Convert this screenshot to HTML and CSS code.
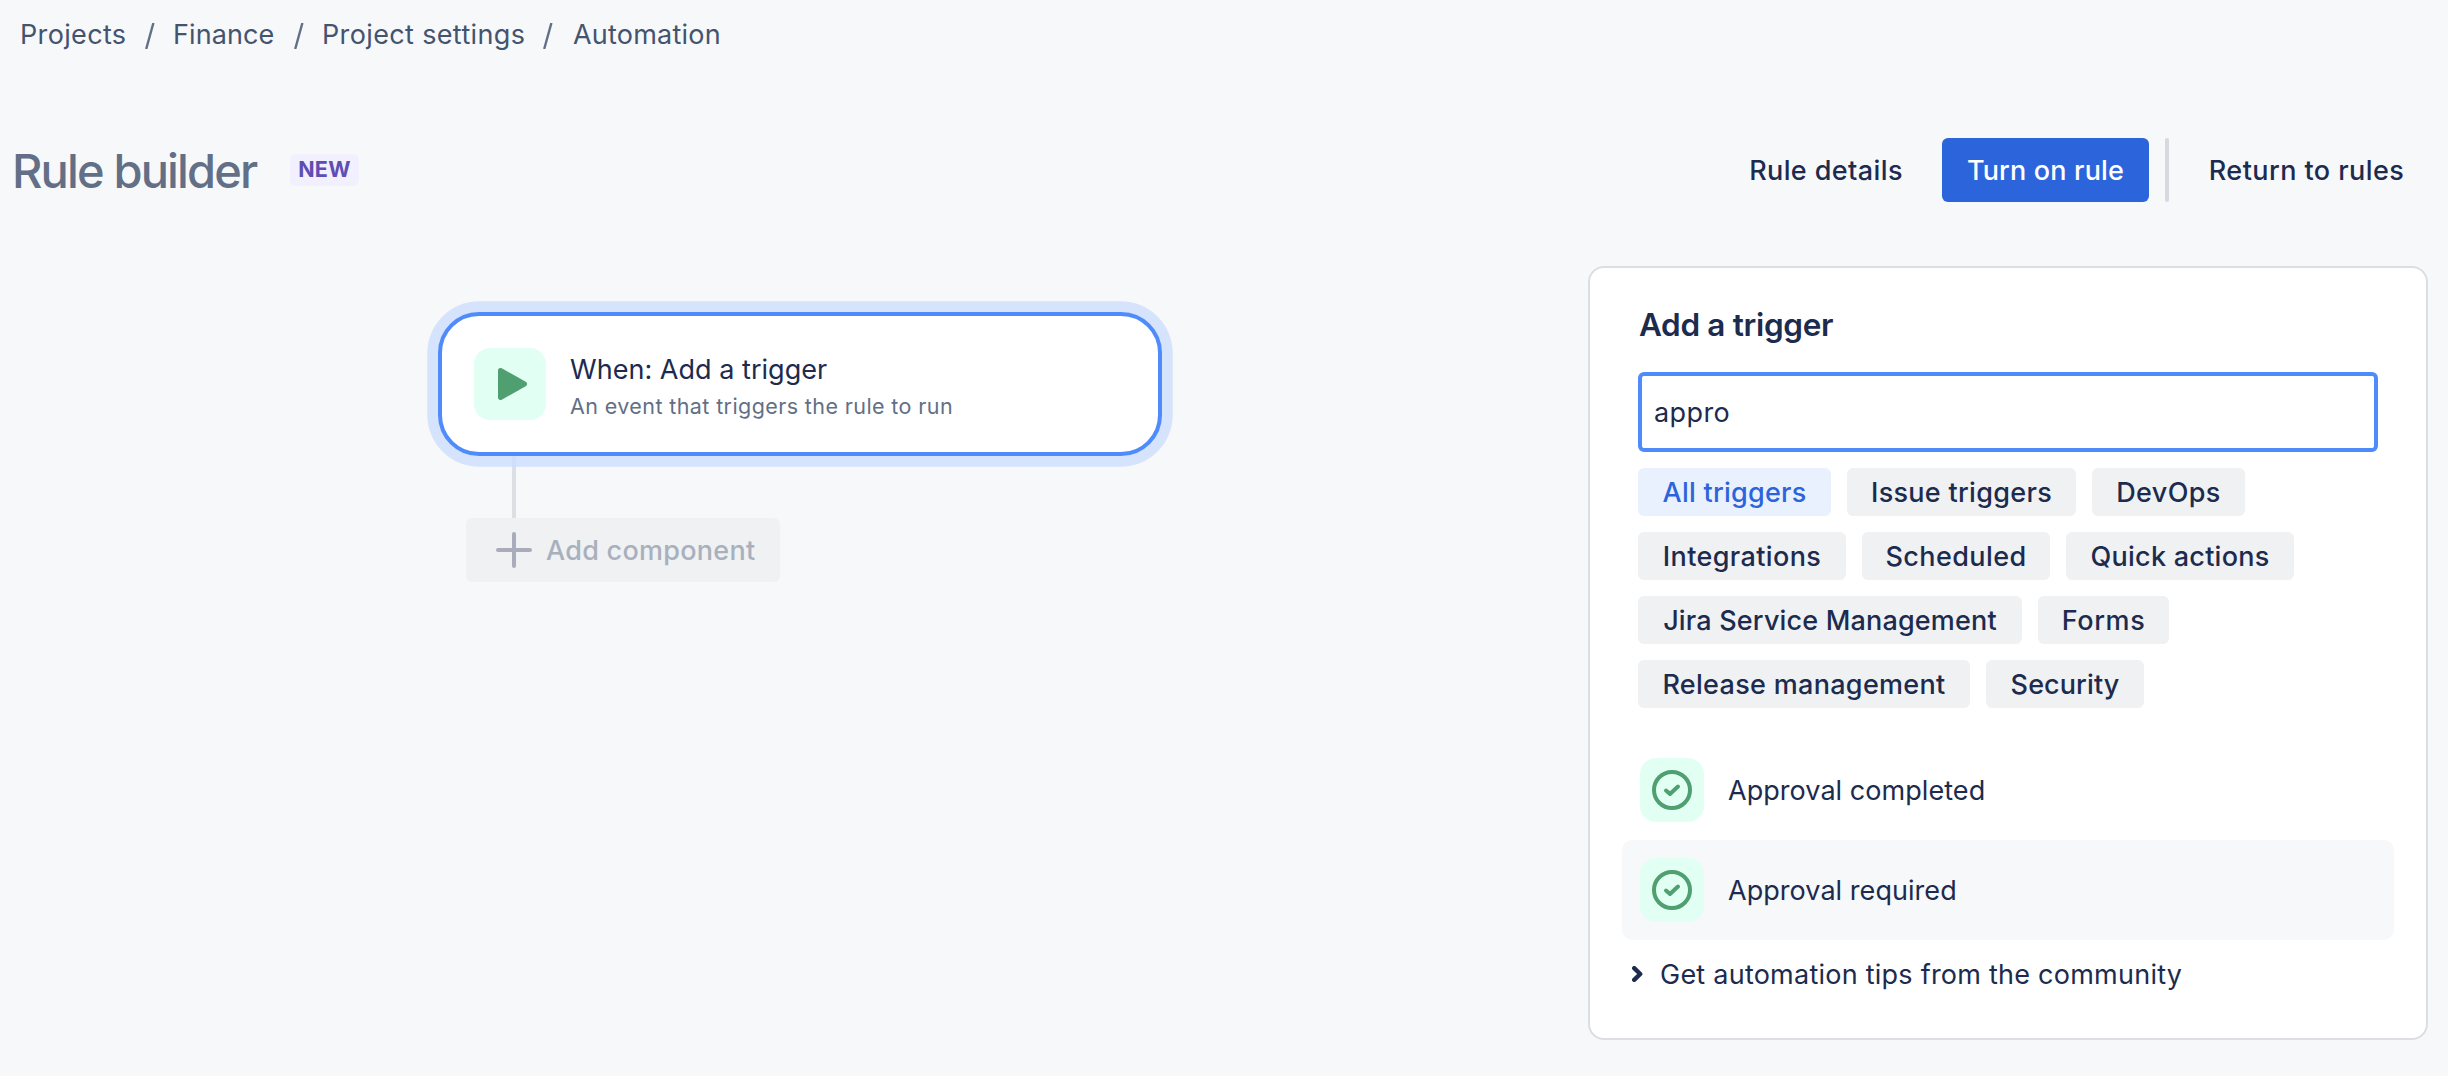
FILE: index.html
```html
<!DOCTYPE html>
<html lang="en">
<head>
<meta charset="utf-8">
<title>Rule builder</title>
<link rel="stylesheet" href="styles.css">
</head>
<body>
<nav class="breadcrumbs">
  <span class="crumb crumb-projects">Projects</span>
  <svg class="slash" viewBox="0 0 10 26"><path d="M1.200 26 8.400 0"/></svg>
  <span class="crumb crumb-finance">Finance</span>
  <svg class="slash" viewBox="0 0 10 26"><path d="M1.200 26 8.400 0"/></svg>
  <span class="crumb crumb-settings">Project settings</span>
  <svg class="slash" viewBox="0 0 10 26"><path d="M1.200 26 8.400 0"/></svg>
  <span class="crumb crumb-automation">Automation</span>
</nav>

<header class="header">
  <h1 class="title">Rule builder</h1>
  <span class="lozenge">NEW</span>
  <div class="actions">
    <button class="btn btn-details">Rule details</button>
    <button class="btn btn-primary">Turn on rule</button>
    <span class="divider"></span>
    <button class="btn btn-return">Return to rules</button>
  </div>
</header>

<main class="workspace">
  <section class="canvas">
    <article class="rule-card">
      <span class="rule-icon">
        <svg viewBox="0 0 72 72"><path d="M26.5 22.5 50.5 36 26.5 49.500Z"/></svg>
      </span>
      <div class="rule-text">
        <div class="rule-name">When: Add a trigger</div>
        <div class="rule-desc">An event that triggers the rule to run</div>
      </div>
    </article>
    <span class="connector"></span>
    <button class="add-component">
      <svg class="plus" viewBox="0 0 36 36"><path d="M18 2V34M2 18H34"/></svg>
      <span>Add component</span>
    </button>
  </section>

  <aside class="panel">
    <h2 class="panel-title">Add a trigger</h2>
    <input class="search" type="text" value="appro">
    <div class="chips">
      <div class="chip-row">
        <button class="chip chip-all">All triggers</button>
        <button class="chip chip-issue">Issue triggers</button>
        <button class="chip chip-devops">DevOps</button>
      </div>
      <div class="chip-row">
        <button class="chip chip-integrations">Integrations</button>
        <button class="chip chip-scheduled">Scheduled</button>
        <button class="chip chip-quick">Quick actions</button>
      </div>
      <div class="chip-row">
        <button class="chip chip-jsm">Jira Service Management</button>
        <button class="chip chip-forms">Forms</button>
      </div>
      <div class="chip-row">
        <button class="chip chip-release">Release management</button>
        <button class="chip chip-security">Security</button>
      </div>
    </div>
    <ul class="triggers">
      <li class="trigger">
        <svg class="trigger-icon" viewBox="0 0 64 64"><circle cx="32" cy="32" r="18"/><path d="M26 32.500 30 36 38 28.500"/></svg>
        <span class="trigger-name">Approval completed</span>
      </li>
      <li class="trigger trigger-active">
        <svg class="trigger-icon" viewBox="0 0 64 64"><circle cx="32" cy="32" r="18"/><path d="M26 32.500 30 36 38 28.500"/></svg>
        <span class="trigger-name">Approval required</span>
      </li>
    </ul>
    <div class="tips">
      <svg class="chevron" viewBox="0 0 11 16"><path d="M2.200 2.200 8.200 8 2.200 13.800"/></svg>
      <span class="tips-label">Get automation tips from the community</span>
    </div>
  </aside>
</main>
</body>
</html>
```

FILE: styles.css
```css
* { box-sizing: border-box; }

body {
  margin: 0;
  height: 1076px;
  background: #f7f8fa;
  color: #1c2b4e;
  font-family: Inter, "Liberation Sans", sans-serif;
  font-size: 27px;
  line-height: 32px;
  white-space: nowrap;
  overflow: hidden;
}

button, input { font: inherit; color: inherit; border: 0; padding: 0; margin: 0; background: none; }
h1, h2, ul { margin: 0; padding: 0; list-style: none; }
svg { display: block; flex: none; fill: none; stroke-linecap: round; stroke-linejoin: round; }

/* Breadcrumbs */
.breadcrumbs { display: flex; align-items: center; height: 68px; padding-left: 20px; color: #44546f; }
.crumb { flex: none; padding-top: 2px; }
.crumb-projects { width: 125px; letter-spacing: .35px; }
.crumb-finance { width: 121px; margin-left: 18px; letter-spacing: .1px; }
.crumb-settings { width: 221px; margin-left: 18px; letter-spacing: .36px; }
.crumb-automation { margin-left: 20px; letter-spacing: .22px; }
.slash { width: 10px; height: 26px; margin-top: 3px; stroke: #626f86; stroke-width: 2.400px; stroke-linecap: butt; }

/* Page header */
.header { display: flex; align-items: center; height: 64px; margin-top: 70px; padding-left: 12px; }
.title { width: 278px; font-size: 47px; font-weight: 550; line-height: 56px; letter-spacing: -1.85px; color: #626f86; padding-top: 2px; }
.lozenge {
  width: 69px; height: 32px; margin-bottom: 1px; border-radius: 6px;
  background: #f2efff; color: #5e4db2;
  font-size: 21.5px; font-weight: 700; line-height: 31px; letter-spacing: .28px; text-align: center;
}
.actions { display: flex; flex: 1; justify-content: flex-end; padding-right: 12px; }
.btn { height: 64px; padding-top: 1px; font-weight: 550; }
.btn-details { width: 204px; margin-right: 14px; letter-spacing: .4px; }
.btn-primary { width: 207px; border-radius: 6px; background: #2c64dc; color: #fff; letter-spacing: .17px; }
.divider { width: 4px; height: 64px; margin: 0 16px; border-radius: 2px; background: #d6d9e0; }
.btn-return { width: 251px; padding-right: 8px; letter-spacing: .43px; }

/* Workspace */
.workspace { display: flex; justify-content: space-between; align-items: flex-start; margin-top: 64px; padding-right: 20px; }
.canvas { display: flex; flex-direction: column; align-items: flex-start; padding: 46px 0 0 438px; }
.rule-card {
  display: flex; align-items: center; width: 724px; height: 144px; padding-left: 32px;
  border: 4px solid #4f8bfa; border-radius: 41px; background: #fff;
  box-shadow: 0 0 0 10.700px #d5e3fd;
}
.rule-icon { width: 72px; height: 72px; border-radius: 16px; background: #e1fff3; }
.rule-icon path { fill: #4f9f70; stroke: #4f9f70; stroke-width: 5px; }
.rule-text { margin-left: 24px; padding-top: 5px; }
.rule-name { line-height: 39px; letter-spacing: .03px; }
.rule-desc { font-size: 21.500px; line-height: 34px; letter-spacing: .4px; color: #626f86; }
.connector { width: 4px; height: 62px; margin-left: 74px; background: linear-gradient(#cfdefb 0 11px, #dcdfe4 11px); z-index: 1; }
.add-component {
  display: flex; align-items: center; width: 314px; height: 64px; margin-left: 28px; padding-left: 30px;
  border-radius: 6px; background: #eff1f3; color: #a9b0bd; font-weight: 550; letter-spacing: .27px;
}
.add-component span { padding-top: 1px; }
.plus { width: 36px; height: 36px; margin-right: 14px; stroke: #a9adbb; stroke-width: 4px; }

/* Trigger panel */
.panel { width: 840px; height: 774px; padding: 0 32px; border: 2px solid #dcdee3; border-radius: 16px; background: #fff; }
.panel-title { margin: 39px 0 0 17px; font-size: 31.500px; font-weight: 600; line-height: 36px; letter-spacing: -.33px; }
.search {
  display: block; width: 740px; height: 80px; margin: 29px 0 16px 16px; padding-left: 12px;
  border: 4px solid #4f8bfa; border-radius: 6px; background: #fff; outline: none; letter-spacing: .39px;
}
.chips { display: flex; flex-direction: column; gap: 16px; margin-left: 16px; }
.chip-row { display: flex; gap: 16px; }
.chip { height: 48px; padding: 2px 0 0; border-radius: 6px; background: #f0f1f3; font-weight: 550; }
.chip-all { width: 193px; background: #e9f1ff; color: #2c64dc; letter-spacing: .24px; }
.chip-issue { width: 229px; letter-spacing: .3px; }
.chip-devops { width: 153px; letter-spacing: .36px; }
.chip-integrations { width: 208px; letter-spacing: .38px; }
.chip-scheduled { width: 188px; letter-spacing: .4px; }
.chip-quick { width: 228px; letter-spacing: .26px; }
.chip-jsm { width: 384px; letter-spacing: .17px; }
.chip-forms { width: 131px; letter-spacing: .6px; }
.chip-release { width: 332px; letter-spacing: .31px; }
.chip-security { width: 158px; letter-spacing: .1px; }

.triggers { margin-top: 32px; }
.trigger { display: flex; align-items: center; gap: 24px; width: 772px; height: 100px; padding-left: 18px; border-radius: 10px; }
.trigger-active { background: #f7f8fa; }
.trigger-icon { width: 64px; height: 64px; border-radius: 16px; background: #e1fff3; stroke: #4f9f70; stroke-width: 4px; }
.trigger-name, .tips-label { padding-top: 2px; }
.trigger-name { letter-spacing: .05px; }

.tips { display: flex; align-items: center; height: 68px; padding-left: 10px; letter-spacing: .24px; }
.chevron { width: 11px; height: 16px; margin-right: 17px; stroke: #1c2b4e; stroke-width: 4.400px; }
```
